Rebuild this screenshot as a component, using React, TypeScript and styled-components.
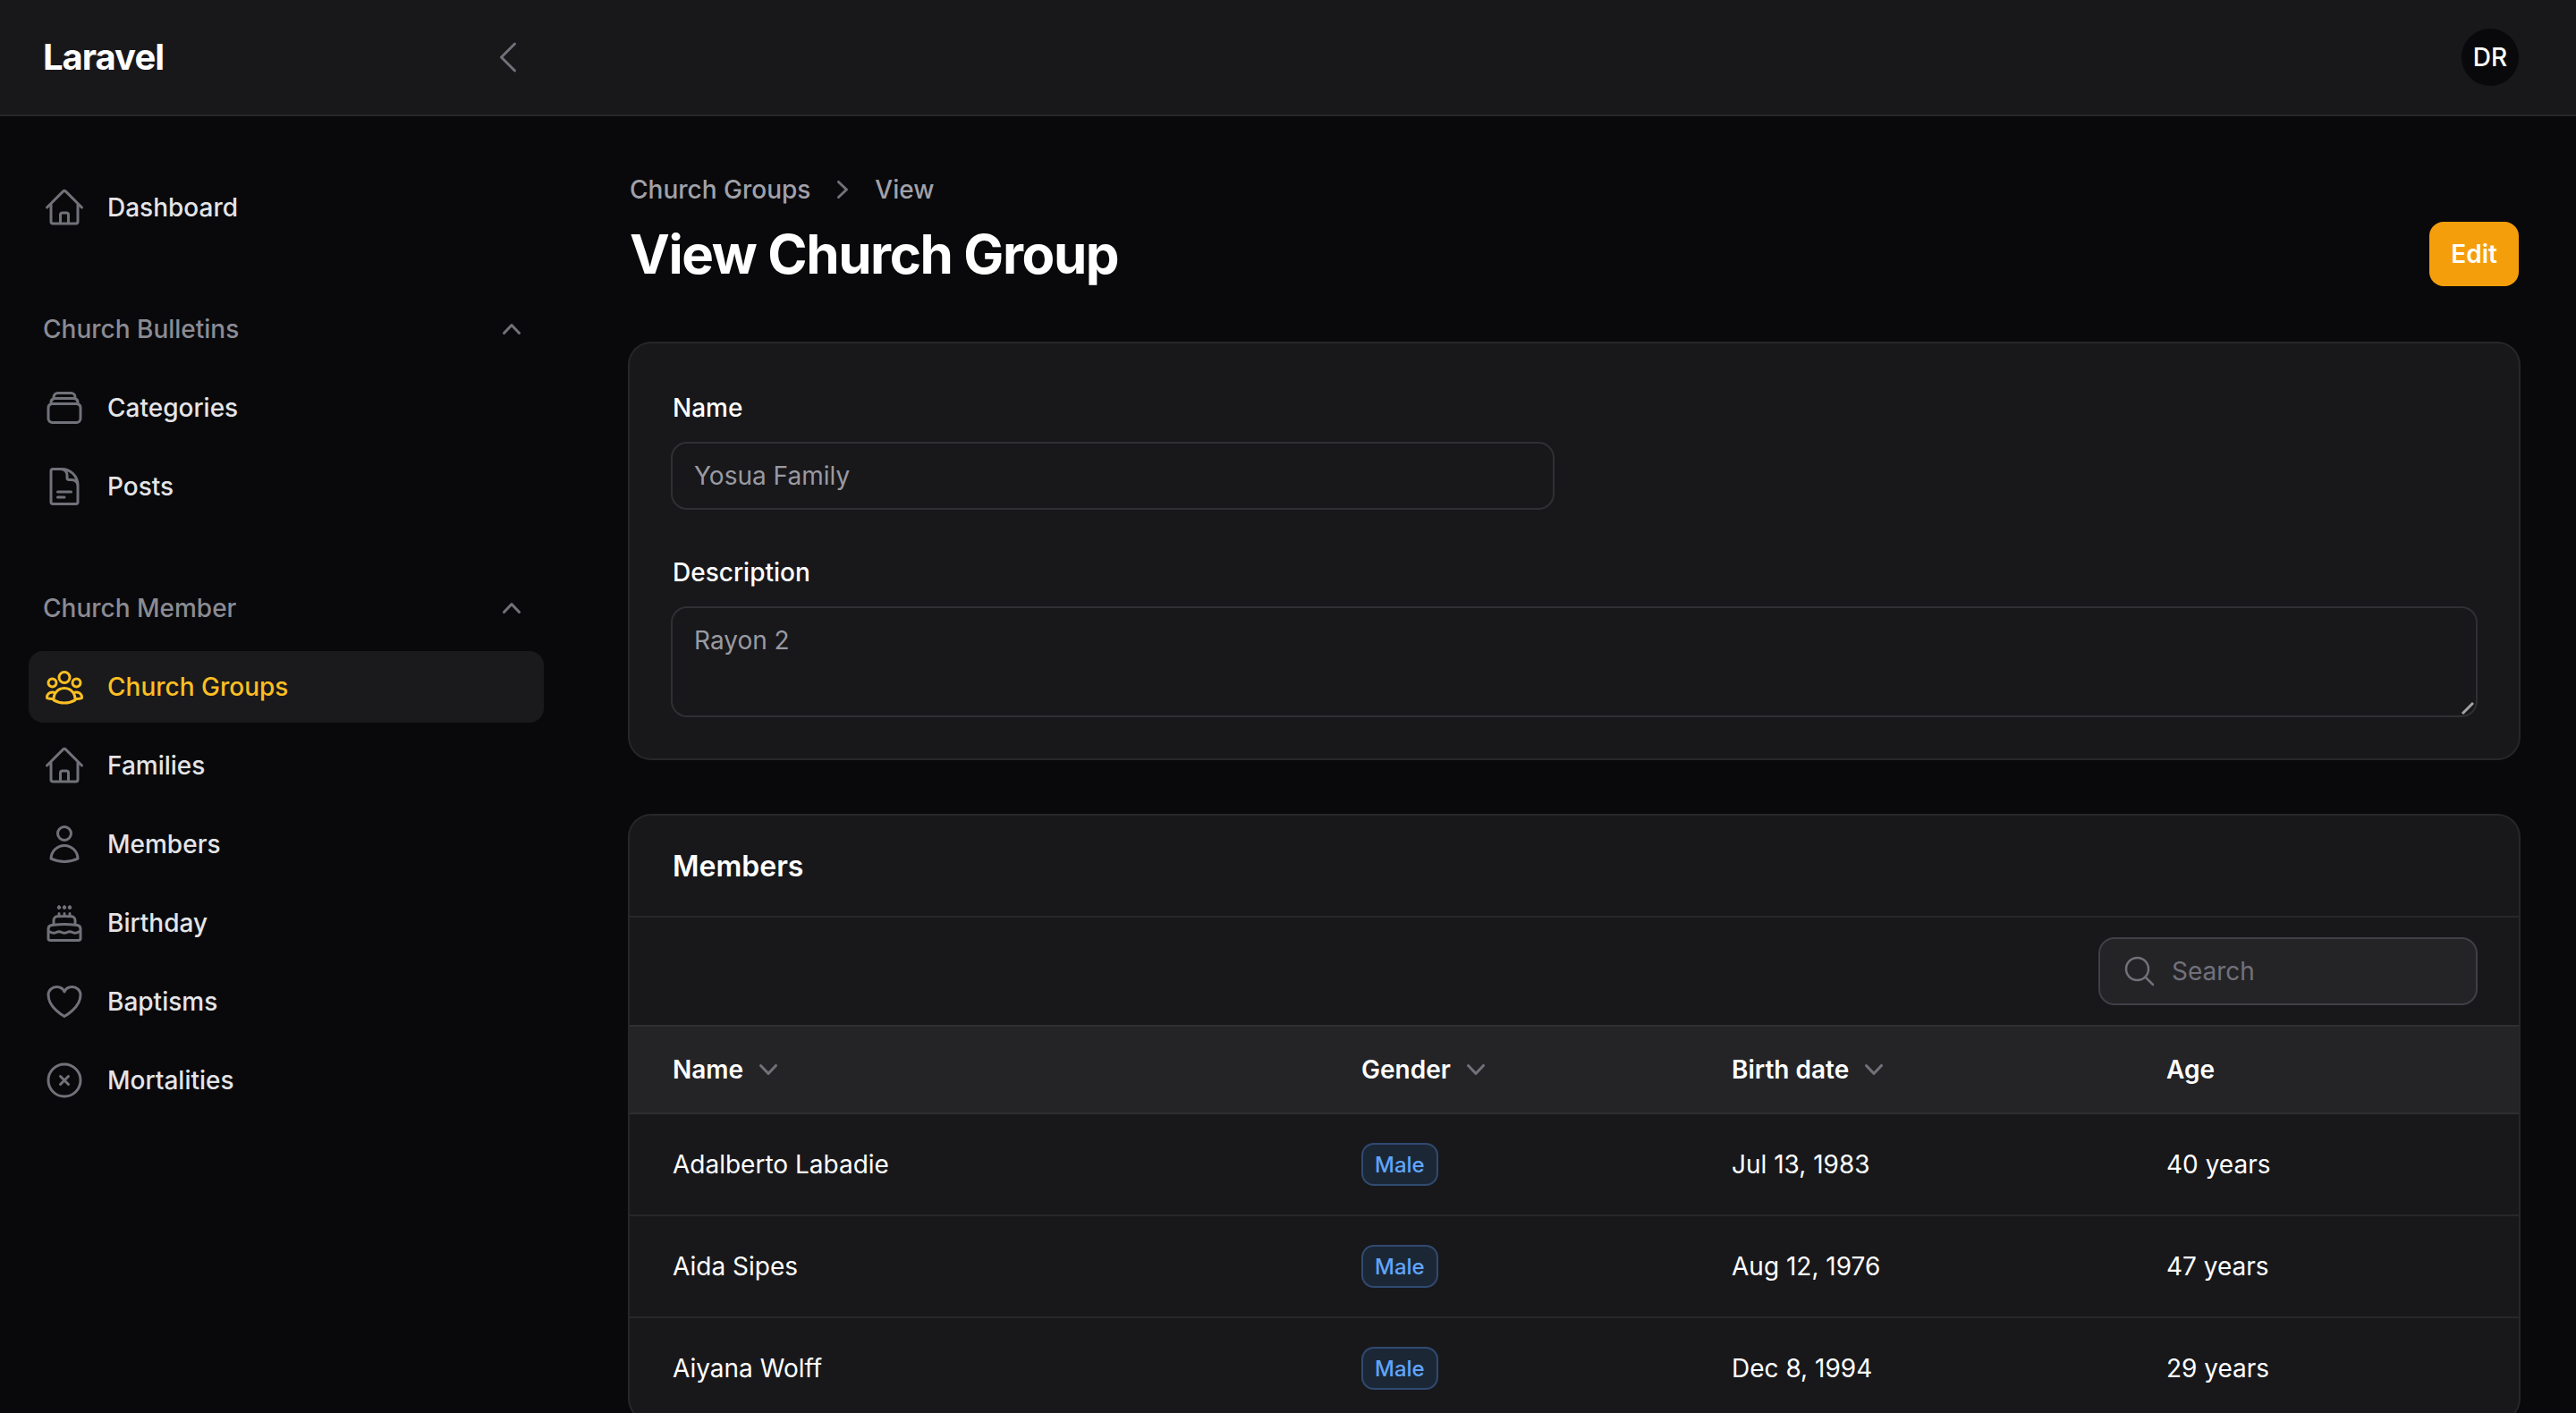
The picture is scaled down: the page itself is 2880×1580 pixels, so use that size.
import React from "react";
import styled, { createGlobalStyle } from "styled-components";

const Colors = {
  PAGE: "#09090b",
  PANEL: "#18181b",
  LINE: "#27272a",
  HEAD: "#242427",
  MUTED: "#71717a",
  AMBER: "#fbbf24",
};

const GlobalStyle = createGlobalStyle`
  html, body {
    margin: 0;
    padding: 0;
    background: ${Colors.PAGE};
    color-scheme: dark;
    font-family: Inter, "Liberation Sans", sans-serif;
  }
  * {
    box-sizing: border-box;
  }
`;

const Page = styled.div`
  height: 100vh;
  overflow: hidden;
  display: flex;
  flex-direction: column;
  background: ${Colors.PAGE};
`;

const Topbar = styled.header`
  position: relative;
  z-index: 1;
  flex: none;
  height: 128px;
  display: flex;
  align-items: center;
  justify-content: space-between;
  padding-right: 64px;
  background: ${Colors.PANEL};
  box-shadow: 0 2px 0 ${Colors.LINE};
`;

const Brand = styled.div`
  width: 640px;
  display: flex;
  align-items: center;
  justify-content: space-between;
  padding: 0 48px;
`;

const Logo = styled.div`
  font-size: 40px;
  line-height: 56px;
  font-weight: 700;
  letter-spacing: -1px;
  color: #fff;
`;

const CollapseIcon = styled.svg`
  width: 48px;
  height: 48px;
  color: ${Colors.MUTED};
`;

const Avatar = styled.div`
  width: 64px;
  height: 64px;
  border-radius: 50%;
  display: flex;
  align-items: center;
  justify-content: center;
  background: ${Colors.PAGE};
  color: #fff;
  font-size: 28px;
  font-weight: 500;
`;

const Body = styled.div`
  flex: 1;
  min-height: 0;
  display: grid;
  grid-template-columns: 640px 1fr;
`;

const Sidebar = styled.nav`
  display: flex;
  flex-direction: column;
  gap: 64px;
  padding: 64px 32px;
`;

const NavGroup = styled.div`
  display: flex;
  flex-direction: column;
`;

const GroupLabel = styled.div`
  height: 64px;
  margin-bottom: 16px;
  padding: 0 16px;
  display: flex;
  align-items: center;
  justify-content: space-between;
  font-size: 28px;
  font-weight: 500;
  color: #8b8b94;
`;

const NavList = styled.div`
  display: flex;
  flex-direction: column;
  gap: 8px;
`;

const NavItem = styled.a<{ $active?: boolean }>`
  height: 80px;
  padding: 0 16px;
  display: flex;
  align-items: center;
  gap: 24px;
  border-radius: 16px;
  font-size: 28px;
  font-weight: 500;
  color: ${(p) => (p.$active ? Colors.AMBER : "#e4e4e7")};
  background: ${(p) => (p.$active ? "#1a1a1c" : "transparent")};
`;

const Outline = styled.svg<{ $active?: boolean }>`
  flex: none;
  width: 48px;
  height: 48px;
  fill: none;
  stroke: currentColor;
  stroke-width: 1.5;
  stroke-linecap: round;
  stroke-linejoin: round;
  color: ${(p) => (p.$active ? Colors.AMBER : Colors.MUTED)};
`;

const Mini = styled.svg`
  flex: none;
  width: 40px;
  height: 40px;
  fill: ${Colors.MUTED};
`;

const Main = styled.main`
  min-width: 0;
  padding: 64px 64px 0 64px;
  display: flex;
  flex-direction: column;
  gap: 64px;
`;

const PageHeader = styled.div`
  display: flex;
  align-items: flex-end;
  justify-content: space-between;
`;

const Crumbs = styled.div`
  display: flex;
  align-items: center;
  gap: 16px;
  margin-bottom: 16px;
  font-size: 28px;
  line-height: 40px;
  font-weight: 500;
  color: #a1a1aa;
`;

const Title = styled.h1`
  margin: 0;
  font-size: 60px;
  line-height: 72px;
  font-weight: 700;
  letter-spacing: -1.4px;
  color: #fff;
`;

const EditButton = styled.button`
  height: 72px;
  padding: 0 24px;
  border: 0;
  border-radius: 16px;
  background: #f59e0b;
  color: #fff;
  font-family: inherit;
  font-size: 28px;
  font-weight: 600;
`;

const Card = styled.section`
  background: ${Colors.PANEL};
  border-radius: 24px;
  box-shadow: 0 0 0 2px ${Colors.LINE};
`;

const FormCard = styled(Card)`
  padding: 48px;
  display: flex;
  flex-direction: column;
  gap: 48px;
`;

const Field = styled.div`
  display: flex;
  flex-direction: column;
  gap: 16px;
`;

const Label = styled.label`
  font-size: 28px;
  line-height: 48px;
  font-weight: 500;
  color: #fff;
`;

const TextInput = styled.input`
  display: block;
  width: 984px;
  height: 72px;
  padding: 0 24px;
  border: 0;
  border-radius: 16px;
  outline: 0;
  background: transparent;
  box-shadow: 0 0 0 2px #303034;
  font-family: inherit;
  font-size: 28px;
  color: #9a9aa2;
  -webkit-text-fill-color: #9a9aa2;
  opacity: 1;
`;

const TextAreaWrap = styled.div`
  position: relative;
`;

const TextArea = styled.textarea`
  display: block;
  width: 100%;
  height: 120px;
  padding: 16px 24px;
  border: 0;
  border-radius: 16px;
  outline: 0;
  resize: none;
  background: transparent;
  box-shadow: 0 0 0 2px #303034;
  font-family: inherit;
  font-size: 28px;
  line-height: 40px;
  color: #9a9aa2;
  -webkit-text-fill-color: #9a9aa2;
  opacity: 1;
`;

const ResizeHandle = styled.svg`
  position: absolute;
  right: 0;
  bottom: 0;
  width: 20px;
  height: 20px;
`;

const CardTitle = styled.h2`
  margin: 0;
  height: 114px;
  padding: 0 48px;
  display: flex;
  align-items: center;
  border-bottom: 2px solid ${Colors.LINE};
  font-size: 32px;
  font-weight: 600;
  color: #fff;
`;

const Toolbar = styled.div`
  height: 120px;
  padding: 0 48px;
  display: flex;
  align-items: center;
  justify-content: flex-end;
`;

const SearchBox = styled.div`
  width: 420px;
  height: 72px;
  padding: 0 24px;
  display: flex;
  align-items: center;
  gap: 16px;
  border-radius: 16px;
  background: ${Colors.HEAD};
  box-shadow: 0 0 0 2px #3f3f46;
`;

const SearchIcon = styled(Outline)`
  width: 40px;
  height: 40px;
`;

const SearchInput = styled.input`
  flex: 1;
  min-width: 0;
  border: 0;
  outline: 0;
  padding: 0;
  background: transparent;
  font-family: inherit;
  font-size: 28px;
  color: #fff;
  &::placeholder {
    color: ${Colors.MUTED};
    opacity: 1;
  }
`;

const Row = styled.div`
  display: grid;
  grid-template-columns: 770px 414px 486px 1fr;
  align-items: center;
  padding-left: 48px;
  height: 114px;
  border-bottom: 2px solid ${Colors.LINE};
  font-size: 28px;
  color: #fff;
`;

const HeadRow = styled(Row)`
  height: 100px;
  border-top: 2px solid #2f2f32;
  border-bottom-color: #2f2f32;
  background: ${Colors.HEAD};
  font-weight: 600;
`;

const HeadCell = styled.div`
  display: flex;
  align-items: center;
  gap: 8px;
`;

const Badge = styled.span`
  display: inline-flex;
  align-items: center;
  height: 44px;
  margin-left: 2px;
  padding: 0 13px;
  border-radius: 12px;
  background: #1c2736;
  box-shadow: 0 0 0 2px #304a70;
  font-size: 24px;
  font-weight: 500;
  color: #60a5fa;
`;

const paths = {
  home: "M2.25 12l8.954-8.955c.44-.439 1.152-.439 1.591 0L21.75 12M4.5 9.75v10.125c0 .621.504 1.125 1.125 1.125H9.75v-4.875c0-.621.504-1.125 1.125-1.125h2.25c.621 0 1.125.504 1.125 1.125V21h4.125c.621 0 1.125-.504 1.125-1.125V9.75M8.25 21h8.25",
  stack:
    "M6 6.878V6a2.25 2.25 0 012.25-2.25h7.5A2.25 2.25 0 0118 6v.878m-12 0c.235-.083.487-.128.75-.128h10.5c.263 0 .515.045.75.128m-12 0A2.25 2.25 0 004.5 9v.878m13.5-3A2.25 2.25 0 0119.5 9v.878m0 0a2.246 2.246 0 00-.75-.128H5.25c-.263 0-.515.045-.75.128m15 0A2.25 2.25 0 0121 12v6a2.25 2.25 0 01-2.25 2.25H5.25A2.25 2.25 0 013 18v-6c0-.98.626-1.813 1.5-2.122",
  doc: "M19.5 14.25v-2.625a3.375 3.375 0 00-3.375-3.375h-1.5A1.125 1.125 0 0113.5 7.125v-1.5a3.375 3.375 0 00-3.375-3.375H8.25m0 12.75h7.5m-7.5 3H12M10.5 2.25H5.625c-.621 0-1.125.504-1.125 1.125v17.25c0 .621.504 1.125 1.125 1.125h12.75c.621 0 1.125-.504 1.125-1.125V11.25a9 9 0 00-9-9z",
  group:
    "M18 18.72a9.094 9.094 0 003.741-.479 3 3 0 00-4.682-2.72m.94 3.198l.001.031c0 .225-.012.447-.037.666A11.944 11.944 0 0112 21c-2.17 0-4.207-.576-5.963-1.584A6.062 6.062 0 016 18.719m12 0a5.971 5.971 0 00-.941-3.197m0 0A5.995 5.995 0 0012 12.75a5.995 5.995 0 00-5.058 2.772m0 0a3 3 0 00-4.681 2.72 8.986 8.986 0 003.74.477m.94-3.197a5.971 5.971 0 00-.94 3.197M15 6.75a3 3 0 11-6 0 3 3 0 016 0zm6 3a2.25 2.25 0 11-4.5 0 2.25 2.25 0 014.5 0zm-13.5 0a2.25 2.25 0 11-4.5 0 2.25 2.25 0 014.5 0z",
  user: "M15.75 6a3.75 3.75 0 11-7.5 0 3.75 3.75 0 017.5 0zM4.501 20.118a7.5 7.5 0 0114.998 0A17.933 17.933 0 0112 21.75c-2.676 0-5.216-.584-7.499-1.632z",
  cake: "M12 8.25v-1.5m0 1.5c-1.355 0-2.697.056-4.024.166C6.845 8.51 6 9.473 6 10.608v2.513m6-4.87c1.355 0 2.697.055 4.024.165C17.155 8.51 18 9.473 18 10.608v2.513m-3-4.87v-1.5m-6 1.5v-1.5m12 9.75l-1.5.75a3.354 3.354 0 01-3 0 3.354 3.354 0 00-3 0 3.354 3.354 0 01-3 0 3.354 3.354 0 00-3 0 3.354 3.354 0 01-3 0L3 16.5m15-3.38a48.474 48.474 0 00-6-.37c-2.032 0-4.034.125-6 .37m12 0c.39.049.777.102 1.163.16 1.07.16 1.837 1.094 1.837 2.175v5.17c0 .62-.504 1.124-1.125 1.124H4.125A1.125 1.125 0 013 20.625v-5.17c0-1.08.768-2.014 1.837-2.174A47.78 47.78 0 016 13.12M12.265 3.11a.375.375 0 11-.53 0L12 2.845l.265.265zm-3 0a.375.375 0 11-.53 0L9 2.845l.265.265zm6 0a.375.375 0 11-.53 0L15 2.845l.265.265z",
  heart:
    "M21 8.25c0-2.485-2.099-4.5-4.688-4.5-1.935 0-3.597 1.126-4.312 2.733-.715-1.607-2.377-2.733-4.313-2.733C5.1 3.75 3 5.765 3 8.25c0 7.22 9 12 9 12s9-4.78 9-12z",
  xCircle: "M9.75 9.75l4.5 4.5m0-4.5l-4.5 4.5M21 12a9 9 0 11-18 0 9 9 0 0118 0z",
  search: "M21 21l-5.197-5.197m0 0A7.5 7.5 0 105.196 5.196a7.5 7.5 0 0010.607 10.607z",
};

const miniPaths = {
  up: "M14.77 12.79a.75.75 0 01-1.06-.02L10 8.832 6.29 12.77a.75.75 0 11-1.08-1.04l4.25-4.5a.75.75 0 011.08 0l4.25 4.5a.75.75 0 01-.02 1.06z",
  down: "M5.23 7.21a.75.75 0 011.06.02L10 11.168l3.71-3.938a.75.75 0 111.08 1.04l-4.25 4.5a.75.75 0 01-1.08 0l-4.25-4.5a.75.75 0 01.02-1.06z",
  right: "M7.21 14.77a.75.75 0 01.02-1.06L11.168 10 7.23 6.29a.75.75 0 111.04-1.08l4.5 4.25a.75.75 0 010 1.08l-4.5 4.25a.75.75 0 01-1.06-.02z",
};

type IconName = keyof typeof paths;

const Icon: React.FC<{ name: IconName; active?: boolean }> = ({ name, active }) => (
  <Outline viewBox="0 0 24 24" $active={active}>
    <path d={paths[name]} />
  </Outline>
);

const Chevron: React.FC<{ dir: keyof typeof miniPaths }> = ({ dir }) => (
  <Mini viewBox="0 0 20 20">
    <path fillRule="evenodd" clipRule="evenodd" d={miniPaths[dir]} />
  </Mini>
);

const groups: {
  label?: string;
  items: { name: IconName; text: string; active?: boolean }[];
}[] = [
  { items: [{ name: "home", text: "Dashboard" }] },
  {
    label: "Church Bulletins",
    items: [
      { name: "stack", text: "Categories" },
      { name: "doc", text: "Posts" },
    ],
  },
  {
    label: "Church Member",
    items: [
      { name: "group", text: "Church Groups", active: true },
      { name: "home", text: "Families" },
      { name: "user", text: "Members" },
      { name: "cake", text: "Birthday" },
      { name: "heart", text: "Baptisms" },
      { name: "xCircle", text: "Mortalities" },
    ],
  },
];

const members = [
  { name: "Adalberto Labadie", gender: "Male", birth: "Jul 13, 1983", age: "40 years" },
  { name: "Aida Sipes", gender: "Male", birth: "Aug 12, 1976", age: "47 years" },
  { name: "Aiyana Wolff", gender: "Male", birth: "Dec 8, 1994", age: "29 years" },
];

export default function App() {
  return (
    <Page>
      <GlobalStyle />
      <Topbar>
        <Brand>
          <Logo>Laravel</Logo>
          <CollapseIcon
            viewBox="0 0 24 24"
            fill="none"
            stroke="currentColor"
            strokeWidth={1.5}
            strokeLinecap="round"
            strokeLinejoin="round"
          >
            <path d="M15.75 19.5L8.25 12l7.5-7.5" />
          </CollapseIcon>
        </Brand>
        <Avatar>DR</Avatar>
      </Topbar>
      <Body>
        <Sidebar>
          {groups.map((group, i) => (
            <NavGroup key={i}>
              {group.label && (
                <GroupLabel>
                  {group.label}
                  <Chevron dir="up" />
                </GroupLabel>
              )}
              <NavList>
                {group.items.map((item) => (
                  <NavItem key={item.text} $active={item.active}>
                    <Icon name={item.name} active={item.active} />
                    {item.text}
                  </NavItem>
                ))}
              </NavList>
            </NavGroup>
          ))}
        </Sidebar>
        <Main>
          <PageHeader>
            <div>
              <Crumbs>
                Church Groups
                <Chevron dir="right" />
                View
              </Crumbs>
              <Title>View Church Group</Title>
            </div>
            <EditButton>Edit</EditButton>
          </PageHeader>
          <FormCard>
            <Field>
              <Label>Name</Label>
              <TextInput disabled value="Yosua Family" readOnly />
            </Field>
            <Field>
              <Label>Description</Label>
              <TextAreaWrap>
                <TextArea disabled value="Rayon 2" readOnly />
                <ResizeHandle viewBox="0 0 20 20">
                  <path d="M5 18L17 6" stroke="#a3a3a3" strokeWidth={3} />
                </ResizeHandle>
              </TextAreaWrap>
            </Field>
          </FormCard>
          <Card>
            <CardTitle>Members</CardTitle>
            <Toolbar>
              <SearchBox>
                <SearchIcon viewBox="0 0 24 24">
                  <path d={paths.search} />
                </SearchIcon>
                <SearchInput placeholder="Search" />
              </SearchBox>
            </Toolbar>
            <HeadRow>
              <HeadCell>
                Name
                <Chevron dir="down" />
              </HeadCell>
              <HeadCell>
                Gender
                <Chevron dir="down" />
              </HeadCell>
              <HeadCell>
                Birth date
                <Chevron dir="down" />
              </HeadCell>
              <HeadCell>Age</HeadCell>
            </HeadRow>
            {members.map((m) => (
              <Row key={m.name}>
                <div>{m.name}</div>
                <div>
                  <Badge>{m.gender}</Badge>
                </div>
                <div>{m.birth}</div>
                <div>{m.age}</div>
              </Row>
            ))}
          </Card>
        </Main>
      </Body>
    </Page>
  );
}
